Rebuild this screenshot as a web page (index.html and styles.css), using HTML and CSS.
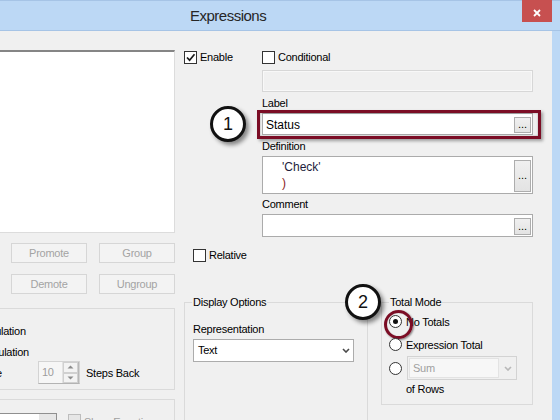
FILE: index.html
```html
<!DOCTYPE html>
<html>
<head>
<meta charset="utf-8">
<link rel="stylesheet" href="styles.css">
</head>
<body>
<div class="window">
  <div class="titlebar">
    <div class="title">Expressions</div>
    <div class="close">
      <svg width="8" height="8" viewBox="0 0 8 8"><path d="M1 1 L7 7 M7 1 L1 7" stroke="#fff" stroke-width="1.8" fill="none"/></svg>
    </div>
  </div>
  <div class="client">
    <div class="leftcol">
      <div class="listbox"></div>
      <div class="btnrow"><div class="btn">Promote</div><div class="btn">Group</div></div>
      <div class="btnrow"><div class="btn">Demote</div><div class="btn">Ungroup</div></div>
      <div class="accum">
        <div class="arow">No Accumulation</div>
        <div class="arow">Full Accumulation</div>
        <div class="arow">
          <span class="acclbl">Accumulate</span>
          <div class="spin">
            <span class="val">10</span>
            <div class="arrows">
              <div class="arr"><svg width="7" height="4" viewBox="0 0 7 4"><path d="M0.5 3.5 L3.5 0.5 L6.5 3.5 Z" fill="#8c8c8c"/></svg></div>
              <div class="arr"><svg width="7" height="4" viewBox="0 0 7 4"><path d="M0.5 0.5 L3.5 3.5 L6.5 0.5 Z" fill="#8c8c8c"/></svg></div>
            </div>
          </div>
          <span class="steps">Steps Back</span>
        </div>
      </div>
      <div class="chartbox">
        <div class="combo"><span class="comboface"></span><span class="combobtn"></span></div>
        <span class="box dis"></span>
        <span class="distext">Show Equation</span>
      </div>
    </div>

    <div class="rightcol">
      <div class="toprow">
        <div class="enablecol">
          <div class="chk"><span class="box"><svg width="11" height="11" viewBox="0 0 11 11"><path d="M2 5.5 L4.6 8.2 L9.5 2.2" stroke="#1a1a1a" stroke-width="1.7" fill="none"/></svg></span>Enable</div>
        </div>
        <div class="formcol">
          <div class="chk"><span class="box"></span>Conditional</div>
          <div class="disfield"></div>
          <div class="lbl">Label</div>
          <div class="field single"><span class="ftext">Status</span><span class="dots">...</span></div>
          <div class="lbl">Definition</div>
          <div class="field multi"><div class="code"><div class="str">'Check'</div><div class="paren">)</div></div><span class="dots">...</span></div>
          <div class="lbl">Comment</div>
          <div class="field single comment"><span class="ftext"></span><span class="dots">...</span></div>
        </div>
      </div>
      <div class="relrow"><div class="chk"><span class="box"></span>Relative</div></div>
      <div class="bottomrow">
        <fieldset class="group display">
          <legend>Display Options</legend>
          <div class="lbl rep">Representation</div>
          <div class="select">
            <span class="seltext">Text</span>
            <svg class="chev" width="8" height="5" viewBox="0 0 8 5"><path d="M1 1 L4 4 L7 1" stroke="#4a4a4a" stroke-width="1.6" fill="none"/></svg>
          </div>
        </fieldset>
        <fieldset class="group total">
          <legend>Total Mode</legend>
          <div class="trow first"><span class="radio on"></span><span class="rtext">No Totals</span></div>
          <div class="trow"><span class="radio"></span><span class="rtext">Expression Total</span></div>
          <div class="trow sumrow"><span class="radio"></span>
            <div class="dselect"><span class="dface">Sum</span><svg class="chev" width="8" height="5" viewBox="0 0 8 5"><path d="M1 1 L4 4 L7 1" stroke="#b8b8b8" stroke-width="1.6" fill="none"/></svg></div>
          </div>
          <div class="ofrows">of Rows</div>
        </fieldset>
      </div>
    </div>

    <div class="highlight"></div>
  </div>
  <div class="callout c1">1</div>
  <div class="callout c2">2</div>
</div>
</body>
</html>
```

FILE: styles.css
```css
* { box-sizing: border-box; }
html, body { margin: 0; padding: 0; }
body {
  width: 560px;
  height: 420px;
  overflow: hidden;
  font-family: "Liberation Sans", Arial, sans-serif;
  font-size: 11px;
  letter-spacing: -0.25px;
  color: #000;
}
.window {
  width: 560px;
  height: 420px;
  background: #bcd8f5;
  position: relative;
  overflow: hidden;
}
.titlebar {
  height: 31px;
  border-top: 1px solid #a6c4e6;
  border-bottom: 1px solid #a6c4e6;
  display: flex;
  align-items: flex-start;
}
.title {
  flex: 1;
  padding-left: 190px;
  padding-top: 5px;
  font-size: 15px;
  line-height: 20px;
  letter-spacing: -0.5px;
  color: #262626;
}
.close {
  width: 30px;
  height: 22px;
  margin-top: -1px;
  margin-right: 8px;
  background: #c75050;
  display: flex;
  align-items: center;
  justify-content: center;
  padding-top: 3px;
}
.close svg { display: block; }

.client {
  width: 552px;
  height: 389px;
  background: #f0f0f0;
  display: flex;
  align-items: flex-start;
  position: relative;
}

/* left column */
.leftcol {
  width: 175px;
  flex: none;
  padding-top: 19px;
  display: flex;
  flex-direction: column;
}
.listbox {
  height: 183px;
  background: #fff;
  border: 1px solid #dcdcdc;
  border-left: none;
  border-top: 2px solid #858585;
}
.btnrow {
  display: flex;
  gap: 12px;
  padding-left: 11px;
  margin-top: 10px;
}
.btnrow + .btnrow { margin-top: 11px; }
.btn {
  width: 76px;
  height: 20px;
  border: 1px solid #d6d6d6;
  background: #f3f3f3;
  color: #a3a3a3;
  display: flex;
  align-items: center;
  justify-content: center;
}
.accum {
  margin-top: 14px;
  margin-left: -100px;
  width: 275px;
  height: 82px;
  border: 1px solid #dadada;
  padding: 11px 0 0 46px;
}
.arow {
  height: 21px;
  display: flex;
  align-items: center;
  white-space: nowrap;
}
.acclbl { width: 91px; flex: none; }
.spin {
  width: 42px;
  height: 23px;
  flex: none;
  border: 1px solid #d3d3d3;
  border-bottom-color: #b3b3b3;
  background: #f6f6f6;
  display: flex;
}
.spin .val {
  flex: 1;
  padding-left: 3px;
  color: #9d9d9d;
  line-height: 21px;
}
.arrows {
  width: 17px;
  display: flex;
  flex-direction: column;
  border-left: 1px solid #e2e2e2;
  border-right: 1px solid #b8b8b8;
}
.arr {
  flex: 1;
  display: flex;
  align-items: center;
  justify-content: center;
  border: 1px solid #d0d0d0;
  background: #f3f3f3;
}
.arr svg { display: block; }
.steps { margin-left: 6px; }

.chartbox {
  margin-top: 9px;
  margin-left: -100px;
  width: 275px;
  height: 60px;
  border: 1px solid #dadada;
  padding: 13px 0 0 56px;
  display: flex;
  align-items: flex-start;
}
.combo {
  width: 100px;
  height: 22px;
  flex: none;
  border: 1px solid #8f8f8f;
  display: flex;
  background: #fff;
}
.comboface { flex: 1; }
.combobtn { width: 17px; background: #e6e6e6; }
.chartbox .box { margin-left: 11px; margin-top: 1px; }
.distext { margin-left: 3px; color: #a0a0a0; line-height: 16px; margin-top: 1px; }

/* right column */
.rightcol {
  width: 349px;
  margin-left: 9px;
  flex: none;
  display: flex;
  flex-direction: column;
}
.toprow { display: flex; }
.enablecol { width: 78px; flex: none; padding-top: 20px; }
.formcol {
  width: 271px;
  flex: none;
  padding-top: 20px;
  display: flex;
  flex-direction: column;
}
.chk {
  height: 13px;
  display: flex;
  align-items: center;
  gap: 3px;
  line-height: 13px;
  white-space: nowrap;
}
.box {
  width: 13px;
  height: 13px;
  flex: none;
  border: 1px solid #333;
  background: #fff;
  display: flex;
  align-items: center;
  justify-content: center;
}
.box svg { display: block; }
.box.dis { background: #e6e6e6; border-color: #bdbdbd; }

.disfield {
  margin-top: 6px;
  height: 22px;
  border: 1px solid #d7d7d7;
  box-shadow: inset 0 0 0 1px #f8f8f8;
  background: #f0f0f0;
}
.lbl {
  margin-top: 5px;
  line-height: 13px;
  height: 13px;
}
.field {
  margin-top: 3px;
  border: 1px solid #ababab;
  background: #fff;
  display: flex;
  align-items: stretch;
  padding: 2px 1px 1px 2px;
}
.field.single { height: 22px; }
.field.comment { height: 23px; }
.field.multi { height: 38px; }
.lbl + .field.multi + .lbl { margin-top: 4px; }
.ftext {
  flex: 1;
  font-size: 12px;
  letter-spacing: 0;
  line-height: 18px;
  padding-left: 1px;
}
.code {
  flex: 1;
  padding-left: 17px;
  padding-top: 0px;
  font-size: 12px;
  letter-spacing: 0;
  line-height: 16px;
}
.str { color: #1c1c3c; }
.paren { color: #8a1a1a; }
.dots {
  width: 17px;
  flex: none;
  border: 1px solid #adadad;
  background: linear-gradient(#f0f0f0, #e3e3e3);
  display: flex;
  align-items: center;
  justify-content: center;
  letter-spacing: 0;
  line-height: 11px;
  font-size: 11px;
  padding-bottom: 1px;
  margin-top: 1px;
}

.relrow { margin-top: 12px; padding-left: 9px; }

.bottomrow {
  margin-top: 34px;
  display: flex;
  align-items: flex-start;
  gap: 13px;
}
fieldset.group {
  margin: 0;
  border: 1px solid #dadada;
  padding: 0 7px 6px 7px;
  min-width: 0;
}
fieldset.group legend {
  padding: 0 1px;
  line-height: 13px;
  height: 13px;
}
.display { width: 184px; height: 140px; }
.rep { margin-top: 14px; padding-left: 1px; }
.select {
  margin-top: 3px;
  margin-left: 1px;
  width: 161px;
  height: 23px;
  border: 1px solid #acacac;
  background: #fff;
  display: flex;
  align-items: center;
  padding: 0 3px 0 4px;
}
.seltext { flex: 1; line-height: 21px; }
.chev { display: block; flex: none; }

.total { width: 152px; margin-top: 1px; }
.trow {
  height: 23px;
  display: flex;
  align-items: center;
  white-space: nowrap;
}
.trow.first { margin-top: 1px; }
.trow.sumrow { height: 24px; }
.radio {
  width: 13px;
  height: 13px;
  flex: none;
  border: 1px solid #333;
  border-radius: 50%;
  background: #fff;
  position: relative;
  display: flex;
  align-items: center;
  justify-content: center;
}
.radio.on::before {
  content: "";
  width: 5px;
  height: 5px;
  border-radius: 50%;
  background: #111;
}
.radio.on::after {
  content: "";
  position: absolute;
  left: -6px;
  top: -6px;
  width: 23px;
  height: 23px;
  border: 3px solid #7b0d25;
  border-radius: 50%;
  box-shadow: 1px 1px 2px rgba(0, 0, 0, 0.45), inset 0 0 1px rgba(0, 0, 0, 0.3);
}
.rtext { margin-left: 4px; }
.dselect {
  margin-left: 5px;
  width: 110px;
  height: 24px;
  border: 1px solid #d3d3d3;
  background: #f0f0f0;
  display: flex;
  align-items: center;
  padding: 1px 4px 1px 1px;
}
.dface {
  width: 92px;
  height: 20px;
  border: 1px solid #e3e3e3;
  background: #f7f7f7;
  color: #9f9f9f;
  line-height: 18px;
  padding-left: 3px;
  margin-right: 5px;
}
.ofrows {
  height: 18px;
  line-height: 18px;
  padding-left: 17px;
}

/* annotation overlays */
.highlight {
  position: absolute;
  left: 257px;
  top: 79px;
  width: 284px;
  height: 29px;
  border: 3px solid #7b0d25;
  box-shadow: 2px 2px 3px rgba(0, 0, 0, 0.35), inset 0 0 2px rgba(0, 0, 0, 0.35);
}
.callout {
  position: absolute;
  width: 36px;
  height: 36px;
  border: 3px solid #111;
  border-radius: 50%;
  background: #fff;
  box-shadow: 3px 3px 4px rgba(0, 0, 0, 0.45);
  display: flex;
  align-items: center;
  justify-content: center;
  font-size: 18px;
  letter-spacing: 0;
  color: #111;
  line-height: 1;
}
.c1 { left: 210px; top: 106px; }
.c2 { left: 345px; top: 284px; }
```
